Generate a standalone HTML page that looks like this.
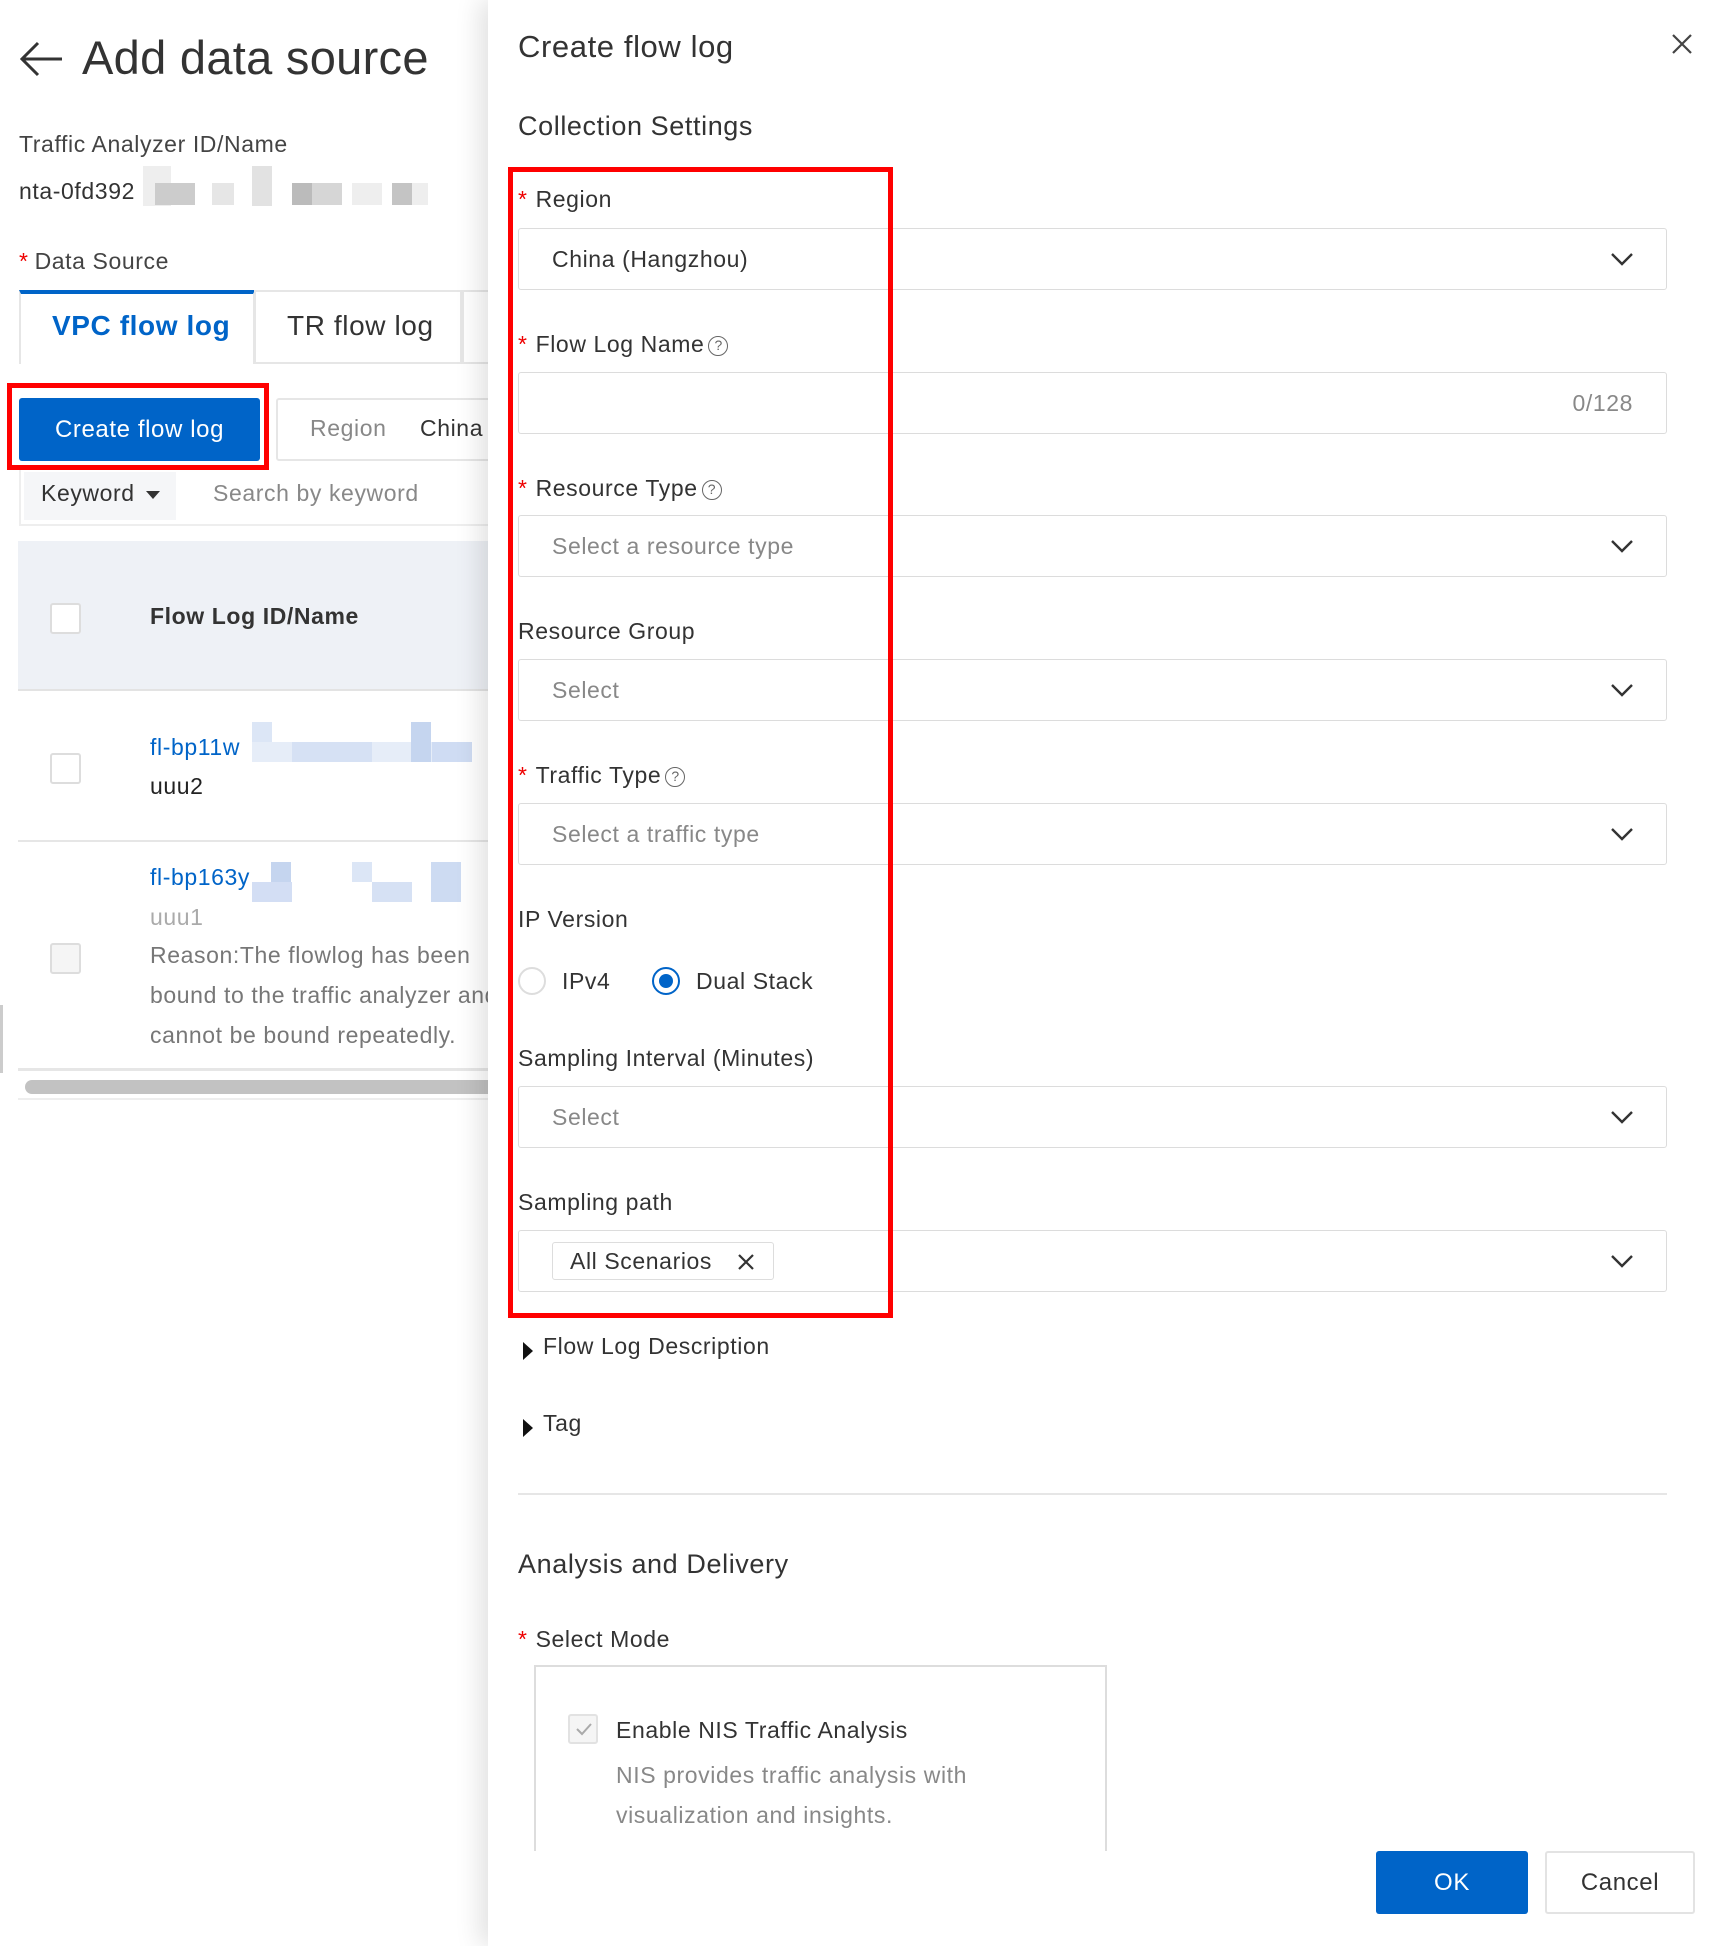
<!DOCTYPE html>
<html><head><meta charset="utf-8"><style>
*{margin:0;padding:0;box-sizing:border-box}
body{width:1716px;height:1946px;position:relative;overflow:hidden;background:#fff;font-family:"Liberation Sans",sans-serif;color:#333;letter-spacing:0.6px}
.a{position:absolute;white-space:nowrap}
.lbl{font-size:23px;color:#333;line-height:28px}
.req{color:#e00;margin-right:8px}
.inp{position:absolute;left:518px;width:1149px;height:62px;border:1px solid #dcdcdc;border-radius:3px;background:#fff}
.inp .t{position:absolute;left:33px;top:0;line-height:60px;font-size:23px}
.ph{color:#888}
.chev{position:absolute;right:32px;top:23px}
.q{display:inline-block;width:20px;height:20px;border:1.5px solid #666;border-radius:50%;font-size:14px;line-height:17px;text-align:center;color:#666;vertical-align:2px;margin-left:4px;letter-spacing:0}
.cb{position:absolute;width:31px;height:31px;border:2px solid #ddd;border-radius:3px;background:#fff}
.blk{position:absolute;background:#ddd}
</style></head><body>

<!-- LEFT PANEL -->
<svg class="a" style="left:18px;top:40px" width="46" height="38" viewBox="0 0 46 38"><path d="M44 19H4M20 3L4 19l16 16" fill="none" stroke="#333" stroke-width="3"/></svg>
<div class="a" style="left:82px;top:30px;font-size:47px;color:#333;line-height:56px;letter-spacing:0.3px">Add data source</div>
<div class="a" style="left:19px;top:131px;font-size:23px;color:#444">Traffic Analyzer ID/Name</div>
<div class="a" style="left:19px;top:178px;font-size:23px;color:#333">nta-0fd392</div>
<div class="blk" style="left:143px;top:166px;width:28px;height:40px;background:#eee"></div>
<div class="blk" style="left:155px;top:183px;width:40px;height:22px;background:#ccc"></div>
<div class="blk" style="left:212px;top:183px;width:22px;height:22px;background:#e6e6e6"></div>
<div class="blk" style="left:252px;top:166px;width:20px;height:40px;background:#e2e2e2"></div>
<div class="blk" style="left:292px;top:183px;width:20px;height:22px;background:#bbb"></div>
<div class="blk" style="left:312px;top:183px;width:30px;height:22px;background:#d6d6d6"></div>
<div class="blk" style="left:352px;top:183px;width:30px;height:22px;background:#eee"></div>
<div class="blk" style="left:392px;top:183px;width:20px;height:22px;background:#c4c4c4"></div>
<div class="blk" style="left:412px;top:183px;width:16px;height:22px;background:#eee"></div>
<div class="a" style="left:19px;top:248px;font-size:23px;color:#444"><span class="req" style="margin-right:6px">*</span>Data Source</div>
<div class="a" style="left:19px;top:290px;width:236px;height:74px;border:2px solid #e6e6e6;border-top:4px solid #0064c8;border-bottom:none;background:#fff"></div>
<div class="a" style="left:52px;top:310px;font-size:28px;color:#0064c8;font-weight:bold">VPC flow log</div>
<div class="a" style="left:254px;top:290px;width:208px;height:74px;border:2px solid #e6e6e6"></div>
<div class="a" style="left:287px;top:310px;font-size:28px;color:#333">TR flow log</div>
<div class="a" style="left:462px;top:290px;width:30px;height:74px;border:2px solid #e6e6e6;border-right:none"></div>
<div class="a" style="left:7px;top:383px;width:262px;height:87px;border:5px solid #f00"></div>
<div class="a" style="left:19px;top:398px;width:241px;height:63px;background:#0064c8;border-radius:3px;color:#fff;font-size:24px;line-height:63px;text-align:center">Create flow log</div>
<div class="a" style="left:276px;top:398px;width:240px;height:63px;border:2px solid #e6e6e6;border-radius:3px"></div>
<div class="a" style="left:310px;top:415px;font-size:23px;color:#888">Region</div>
<div class="a" style="left:420px;top:415px;font-size:23px;color:#333">China</div>
<div class="a" style="left:19px;top:470px;width:480px;height:56px;border:2px solid #eee;border-top:none"></div>
<div class="a" style="left:24px;top:472px;width:152px;height:48px;background:#f5f6f8"></div>
<div class="a" style="left:41px;top:480px;font-size:23px;color:#333">Keyword</div>
<svg class="a" style="left:146px;top:491px" width="14" height="8"><path d="M0 0h14L7 8z" fill="#333"/></svg>
<div class="a" style="left:213px;top:480px;font-size:23px;color:#888">Search by keyword</div>
<div class="a" style="left:18px;top:541px;width:480px;height:150px;background:#eef1f6;border-bottom:2px solid #e3e3e3"></div>
<div class="cb" style="left:50px;top:603px"></div>
<div class="a" style="left:150px;top:603px;font-size:23px;font-weight:bold;color:#333">Flow Log ID/Name</div>
<div class="cb" style="left:50px;top:753px"></div>
<div class="a" style="left:150px;top:734px;font-size:23px;color:#0064c8">fl-bp11w</div>
<div class="blk" style="left:252px;top:722px;width:20px;height:40px;background:#dce6f6"></div>
<div class="blk" style="left:252px;top:742px;width:220px;height:20px;background:#e6edf8"></div>
<div class="blk" style="left:292px;top:742px;width:80px;height:20px;background:#d6e1f4"></div>
<div class="blk" style="left:411px;top:722px;width:20px;height:40px;background:#c5d5ef"></div>
<div class="blk" style="left:432px;top:742px;width:40px;height:20px;background:#cfdcf3"></div>
<div class="a" style="left:150px;top:773px;font-size:23px;color:#222">uuu2</div>
<div class="a" style="left:18px;top:840px;width:480px;height:2px;background:#e6e6e6"></div>
<div class="cb" style="left:50px;top:943px;background:#f5f5f5"></div>
<div class="a" style="left:150px;top:864px;font-size:23px;color:#0064c8">fl-bp163y</div>
<div class="blk" style="left:271px;top:862px;width:20px;height:40px;background:#c5d5ef"></div>
<div class="blk" style="left:252px;top:882px;width:40px;height:20px;background:#d3def4"></div>
<div class="blk" style="left:352px;top:862px;width:20px;height:20px;background:#dce6f6"></div>
<div class="blk" style="left:372px;top:882px;width:40px;height:20px;background:#d6e1f4"></div>
<div class="blk" style="left:431px;top:862px;width:30px;height:40px;background:#cddbf2"></div>
<div class="a" style="left:150px;top:904px;font-size:23px;color:#aaa">uuu1</div>
<div class="a" style="left:150px;top:935px;font-size:23px;color:#777;line-height:40px">Reason:The flowlog has been<br>bound to the traffic analyzer and<br>cannot be bound repeatedly.</div>
<div class="a" style="left:18px;top:1068px;width:480px;height:3px;background:#e6e6e6"></div>
<div class="a" style="left:25px;top:1080px;width:470px;height:14px;background:#c2c2c2;border-radius:7px"></div>
<div class="a" style="left:18px;top:1098px;width:480px;height:2px;background:#eee"></div>
<div class="a" style="left:0;top:1005px;width:3px;height:68px;background:#ccc"></div>

<!-- DRAWER -->
<div class="a" style="left:488px;top:0;width:1228px;height:1946px;background:#fff;box-shadow:-8px 0 24px rgba(0,0,0,0.12)"></div>
<div class="a" style="left:518px;top:29px;font-size:31px;color:#333">Create flow log</div>
<svg class="a" style="left:1670px;top:32px" width="24" height="24" viewBox="0 0 24 24"><path d="M3 3L21 21M21 3L3 21" stroke="#444" stroke-width="2.2"/></svg>
<div class="a" style="left:518px;top:111px;font-size:27px;color:#333">Collection Settings</div>

<div class="a lbl" style="left:518px;top:185px"><span class="req">*</span>Region</div>
<div class="inp" style="top:228px"><span class="t">China (Hangzhou)</span><svg class="chev" width="24" height="14" viewBox="0 0 24 14"><path d="M2 2l10 10L22 2" fill="none" stroke="#333" stroke-width="2.4"/></svg></div>

<div class="a lbl" style="left:518px;top:330px"><span class="req">*</span>Flow Log Name<span class="q">?</span></div>
<div class="inp" style="top:372px"><span class="t ph" style="left:auto;right:33px">0/128</span></div>

<div class="a lbl" style="left:518px;top:474px"><span class="req">*</span>Resource Type<span class="q">?</span></div>
<div class="inp" style="top:515px"><span class="t ph">Select a resource type</span><svg class="chev" width="24" height="14" viewBox="0 0 24 14"><path d="M2 2l10 10L22 2" fill="none" stroke="#333" stroke-width="2.4"/></svg></div>

<div class="a lbl" style="left:518px;top:617px">Resource Group</div>
<div class="inp" style="top:659px"><span class="t ph">Select</span><svg class="chev" width="24" height="14" viewBox="0 0 24 14"><path d="M2 2l10 10L22 2" fill="none" stroke="#333" stroke-width="2.4"/></svg></div>

<div class="a lbl" style="left:518px;top:761px"><span class="req">*</span>Traffic Type<span class="q">?</span></div>
<div class="inp" style="top:803px"><span class="t ph">Select a traffic type</span><svg class="chev" width="24" height="14" viewBox="0 0 24 14"><path d="M2 2l10 10L22 2" fill="none" stroke="#333" stroke-width="2.4"/></svg></div>

<div class="a lbl" style="left:518px;top:905px">IP Version</div>
<div class="a" style="left:518px;top:967px;width:28px;height:28px;border:2px solid #ddd;border-radius:50%"></div>
<div class="a lbl" style="left:562px;top:967px">IPv4</div>
<div class="a" style="left:652px;top:967px;width:28px;height:28px;border:2px solid #0064c8;border-radius:50%"><div style="position:absolute;left:5px;top:5px;width:14px;height:14px;border-radius:50%;background:#0064c8"></div></div>
<div class="a lbl" style="left:696px;top:967px">Dual Stack</div>

<div class="a lbl" style="left:518px;top:1044px">Sampling Interval (Minutes)</div>
<div class="inp" style="top:1086px"><span class="t ph">Select</span><svg class="chev" width="24" height="14" viewBox="0 0 24 14"><path d="M2 2l10 10L22 2" fill="none" stroke="#333" stroke-width="2.4"/></svg></div>

<div class="a lbl" style="left:518px;top:1188px">Sampling path</div>
<div class="inp" style="top:1230px"><div style="position:absolute;left:33px;top:11px;width:222px;height:38px;border:1px solid #ddd;border-radius:3px;font-size:23px;line-height:36px;padding-left:17px">All Scenarios<svg style="position:absolute;right:18px;top:10px" width="18" height="18" viewBox="0 0 18 18"><path d="M2 2l14 14M16 2L2 16" stroke="#333" stroke-width="2.2"/></svg></div><svg class="chev" width="24" height="14" viewBox="0 0 24 14"><path d="M2 2l10 10L22 2" fill="none" stroke="#333" stroke-width="2.4"/></svg></div>

<div class="a" style="left:508px;top:167px;width:385px;height:1151px;border:5px solid #f00"></div>

<svg class="a" style="left:523px;top:1342px" width="10" height="18"><path d="M0 0L10 9L0 18Z" fill="#111"/></svg>
<div class="a lbl" style="left:543px;top:1332px">Flow Log Description</div>
<svg class="a" style="left:523px;top:1419px" width="10" height="18"><path d="M0 0L10 9L0 18Z" fill="#111"/></svg>
<div class="a lbl" style="left:543px;top:1409px">Tag</div>
<div class="a" style="left:518px;top:1493px;width:1149px;height:2px;background:#e6e6e6"></div>

<div class="a" style="left:518px;top:1549px;font-size:27px;color:#333">Analysis and Delivery</div>
<div class="a lbl" style="left:518px;top:1625px"><span class="req">*</span>Select Mode</div>
<div class="a" style="left:534px;top:1665px;width:573px;height:190px;border:2px solid #ddd;border-bottom:none"></div>
<div class="a" style="left:568px;top:1714px;width:30px;height:30px;border:2px solid #e2e2e2;border-radius:3px;background:#f5f5f5"><svg style="position:absolute;left:5px;top:6px" width="18" height="14"><path d="M2 7l5 5 9-10" fill="none" stroke="#aaa" stroke-width="2"/></svg></div>
<div class="a lbl" style="left:616px;top:1716px">Enable NIS Traffic Analysis</div>
<div class="a" style="left:616px;top:1755px;font-size:23px;color:#888;line-height:40px">NIS provides traffic analysis with<br>visualization and insights.</div>

<div class="a" style="left:488px;top:1851px;width:1228px;height:95px;background:#fff"></div>
<div class="a" style="left:1376px;top:1851px;width:152px;height:63px;background:#0064c8;border-radius:3px;color:#fff;font-size:24px;line-height:63px;text-align:center">OK</div>
<div class="a" style="left:1545px;top:1851px;width:150px;height:63px;border:2px solid #e3e3e3;border-radius:3px;color:#333;font-size:24px;line-height:59px;text-align:center">Cancel</div>
</body></html>
